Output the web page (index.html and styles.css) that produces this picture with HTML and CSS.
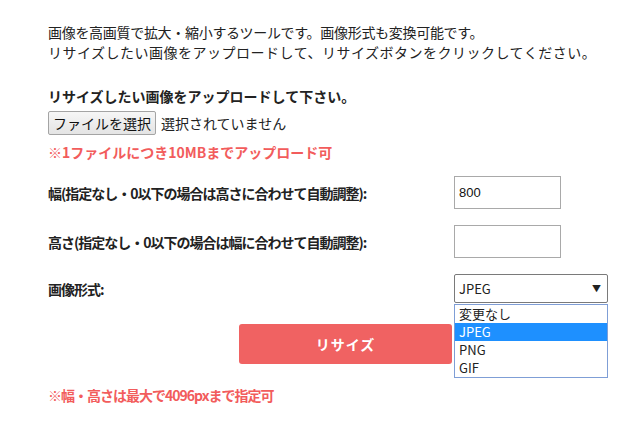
FILE: index.html
```html
<!DOCTYPE html>
<html lang="ja">
<head>
    <meta charset="UTF-8">
    <meta name="viewport" content="width=device-width, initial-scale=1.0">
    <title>画像リサイズ</title>
    <link rel="stylesheet" href="styles.css">
</head>
<body>
    <div class="resize-tool">
        <p class="intro">
            画像を高画質で拡大・縮小するツールです。画像形式も変換可能です。<br>
            <span class="intro-wide">リサイズしたい画像をアップロードして、リサイズボタンをクリックしてください。</span>
        </p>

        <div class="upload">
            <p class="upload-title">リサイズしたい画像をアップロードして下さい。</p>
            <div class="file-row">
                <button class="file-btn">ファイルを選択</button>
                <span class="file-name">選択されていません</span>
            </div>
            <p class="note">※1ファイルにつき10MBまでアップロード可</p>
        </div>

        <div class="form-row">
            <label class="form-label">幅(指定なし・0以下の場合は高さに合わせて自動調整):</label>
            <input class="num-input" type="text" value="800">
        </div>
        <div class="form-row">
            <label class="form-label">高さ(指定なし・0以下の場合は幅に合わせて自動調整):</label>
            <input class="num-input" type="text" value="">
        </div>
        <div class="form-row">
            <label class="form-label">画像形式:</label>
            <div class="select-wrap">
                <div class="select-box">
                    <span>JPEG</span>
                    <span class="select-arrow">&#9660;</span>
                </div>
                <ul class="select-list">
                    <li>変更なし</li>
                    <li class="selected">JPEG</li>
                    <li>PNG</li>
                    <li>GIF</li>
                </ul>
            </div>
        </div>

        <div class="submit-row">
            <button class="resize-btn">リサイズ</button>
        </div>

        <p class="note note-last">※幅・高さは最大で4096pxまで指定可</p>
    </div>
</body>
</html>
```

FILE: styles.css
```css
*{
    box-sizing: border-box;
    margin: 0;
    padding: 0;
}
body{
    background: #fff;
    color: #222;
    font-family: "Noto Sans CJK JP", "Noto Sans", sans-serif;
    font-size: 14px;
    line-height: 20px;
}
.resize-tool{
    padding: 22px 28px 0 48px;
}
.intro{
    margin-bottom: 24px;
    letter-spacing: -0.3px;
}
.intro-wide{
    letter-spacing: 0.5px;
}
.upload-title{
    font-weight: bold;
}
.file-row{
    display: flex;
    align-items: center;
    margin-top: 5px;
    margin-bottom: 7px;
}
.file-btn{
    height: 24px;
    width: 108px;
    font-family: inherit;
    font-size: 14px;
    color: #111;
    background: linear-gradient(#f6f6f6, #e4e4e4);
    border: 1px solid #a4a4a4;
    border-radius: 2px;
}
.file-name{
    margin-left: 5px;
}
.note{
    color: #f25c5c;
    font-weight: bold;
}
.form-row{
    display: flex;
    align-items: center;
    margin-top: 14px;
}
.form-row + .form-row{
    margin-top: 16px;
}
.form-label{
    width: 406px;
    font-weight: bold;
    letter-spacing: -1px;
}
.num-input{
    width: 107px;
    height: 33px;
    border: 1px solid #a9a9a9;
    padding: 0 4px;
    font-family: "Liberation Sans", Arial, sans-serif;
    font-size: 13px;
    color: #111;
    outline: none;
}
.select-wrap{
    position: relative;
}
.select-box{
    width: 154px;
    height: 29px;
    border: 1px solid #7a7a7a;
    border-radius: 2px;
    display: flex;
    align-items: center;
    justify-content: space-between;
    padding: 0 6px 0 4px;
    font-size: 13px;
}
.select-arrow{
    font-size: 9px;
}
.select-list{
    position: absolute;
    top: 30px;
    left: 0;
    width: 154px;
    list-style: none;
    background: #fff;
    border: 1px solid #7f9ed6;
    font-size: 13px;
    z-index: 10;
}
.select-list li{
    height: 18px;
    line-height: 18px;
    padding-left: 4px;
}
.select-list li.selected{
    background: #1e90ff;
    color: #fff;
}
.submit-row{
    margin-top: 21px;
    padding-left: 191px;
}
.resize-btn{
    width: 213px;
    height: 40px;
    border: none;
    border-radius: 3px;
    background: #f06262;
    color: #fff;
    font-family: inherit;
    font-size: 14px;
    font-weight: bold;
    letter-spacing: 1px;
}
.note-last{
    margin-top: 21px;
    letter-spacing: -1px;
}
```
